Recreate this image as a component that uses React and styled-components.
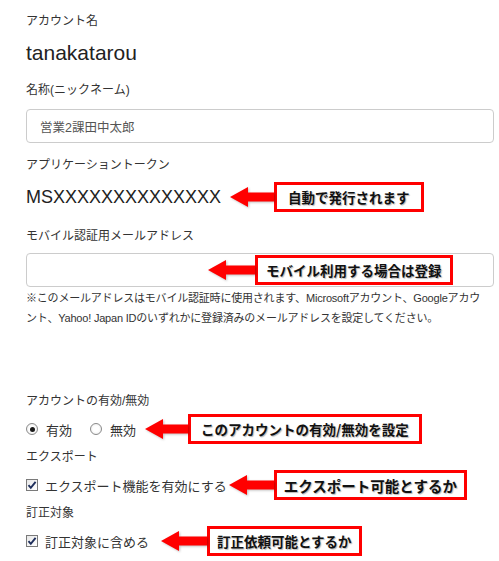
import styled, { createGlobalStyle } from "styled-components";

const GlobalStyle = createGlobalStyle`
  body {
    margin: 0;
    background: #ffffff;
    color: #333;
    font-family: "Liberation Sans", "Noto Sans CJK JP", sans-serif;
  }
`;

const Page = styled.div`
  display: flex;
  flex-direction: column;
  padding: 11px 5px 0 26px;
`;

const Label = styled.div`
  font-size: 12px;
  line-height: 20px;
  color: #333;
  margin-top: ${(p) => p.$mt || 0}px;
`;

const AccountValue = styled.div`
  font-size: 21px;
  line-height: 24px;
  color: #222;
  margin-top: 10px;
`;

const InputWrap = styled.div`
  position: relative;
  margin-top: ${(p) => p.$mt || 0}px;
`;

const TextInput = styled.input`
  display: block;
  box-sizing: border-box;
  width: 100%;
  height: 34px;
  border: 1px solid #ccc;
  border-radius: 4px;
  padding: 0 13px;
  font-family: inherit;
  font-size: 12.5px;
  color: #555;
  background: #fff;
  outline: none;
`;

const TokenRow = styled.div`
  display: flex;
  align-items: center;
  height: 30px;
  margin-top: 7px;
`;

const Token = styled.span`
  font-size: 18px;
  color: #222;
`;

const Callout = styled.div`
  display: flex;
  align-items: center;
  margin-left: ${(p) => p.$ml || 0}px;
`;

const Overlay = styled(Callout)`
  position: absolute;
  left: 182px;
  top: 2px;
  margin-left: 0;
`;

const CalloutBox = styled.div`
  box-sizing: border-box;
  height: 30px;
  display: flex;
  align-items: center;
  padding: 0 ${(p) => p.$pad || 11}px;
  border: 3px solid #ff0000;
  background: #fff;
  font-family: "Noto Sans CJK JP", sans-serif;
  font-weight: 700;
  font-size: ${(p) => p.$size || 13.5}px;
  color: #111;
  white-space: nowrap;
  text-shadow: 1px 1px 1px rgba(0, 0, 0, 0.28);
`;

const ArrowSvg = styled.svg`
  display: block;
  flex: none;
  filter: drop-shadow(1px 1px 1px rgba(0, 0, 0, 0.25));
`;

const Note = styled.div`
  margin-top: 1px;
  font-size: 11px;
  line-height: 20px;
  letter-spacing: -0.2px;
  color: #333;
  white-space: nowrap;
`;

const OptionRow = styled.div`
  display: flex;
  align-items: center;
  height: 30px;
  margin-top: 3px;
`;

const Option = styled.label`
  display: flex;
  align-items: center;
  gap: ${(p) => p.$gap || 8}px;
  margin-right: ${(p) => p.$mr || 0}px;
  font-family: "Noto Sans CJK JP", sans-serif;
  font-size: 13px;
  color: #333;
`;

const Radio = styled.span`
  box-sizing: border-box;
  width: 12px;
  height: 12px;
  border-radius: 50%;
  border: 1px solid #8a8a8a;
  background: radial-gradient(circle, #ffffff 40%, #e6e6e6 100%);
  display: flex;
  align-items: center;
  justify-content: center;
  &::after {
    content: "";
    width: 5px;
    height: 5px;
    border-radius: 50%;
    background: ${(p) => (p.$checked ? "#1a1a1a" : "transparent")};
  }
`;

const CheckBox = styled.span`
  box-sizing: border-box;
  width: 12px;
  height: 12px;
  border: 1px solid #7a7a7a;
  background: linear-gradient(135deg, #e8e8e8, #ffffff);
  display: flex;
  align-items: center;
  justify-content: center;
`;

function Arrow({ width = 44 }) {
  return (
    <ArrowSvg width={width} height="22" viewBox={`0 0 ${width} 22`}>
      <polygon points="0,11 18,1 18,21" fill="#ff0000" />
      <rect x="16" y="6.5" width={width - 16} height="9" fill="#ff0000" />
    </ArrowSvg>
  );
}

function Check() {
  return (
    <CheckBox>
      <svg width="10" height="10" viewBox="0 0 10 10">
        <path
          d="M1.5 5.2 L3.8 7.8 L8.6 1.8"
          fill="none"
          stroke="#1f2f5c"
          strokeWidth="1.9"
        />
      </svg>
    </CheckBox>
  );
}

export default function App() {
  return (
    <>
      <GlobalStyle />
      <Page>
        <Label>アカウント名</Label>
        <AccountValue>tanakatarou</AccountValue>

        <Label $mt={15}>名称(ニックネーム)</Label>
        <InputWrap $mt={9}>
          <TextInput readOnly value="営業2課田中太郎" />
        </InputWrap>

        <Label $mt={12}>アプリケーショントークン</Label>
        <TokenRow>
          <Token>MSXXXXXXXXXXXXXX</Token>
          <Callout $ml={9}>
            <Arrow width={44} />
            <CalloutBox $pad={11}>自動で発行されます</CalloutBox>
          </Callout>
        </TokenRow>

        <Label $mt={14}>モバイル認証用メールアドレス</Label>
        <InputWrap $mt={7}>
          <TextInput readOnly value="" />
          <Overlay>
            <Arrow width={47} />
            <CalloutBox $pad={8}>モバイル利用する場合は登録</CalloutBox>
          </Overlay>
        </InputWrap>
        <Note>
          ※このメールアドレスはモバイル認証時に使用されます、Microsoftアカウント、Googleアカウ
          <br />
          ント、Yahoo! Japan IDのいずれかに登録済みのメールアドレスを設定してください。
        </Note>

        <Label $mt={63}>アカウントの有効/無効</Label>
        <OptionRow>
          <Option $mr={18}>
            <Radio $checked />
            有効
          </Option>
          <Option>
            <Radio />
            無効
          </Option>
          <Callout $ml={9}>
            <Arrow width={43} />
            <CalloutBox $pad={10}>このアカウントの有効/無効を設定</CalloutBox>
          </Callout>
        </OptionRow>

        <Label $mt={3}>エクスポート</Label>
        <OptionRow>
          <Option $gap={7}>
            <Check />
            エクスポート機能を有効にする
          </Option>
          <Callout $ml={2}>
            <Arrow width={45} />
            <CalloutBox $pad={7} $size={14.5}>
              エクスポート可能とするか
            </CalloutBox>
          </Callout>
        </OptionRow>

        <Label $mt={3}>訂正対象</Label>
        <OptionRow>
          <Option $gap={7}>
            <Check />
            訂正対象に含める
          </Option>
          <Callout $ml={12}>
            <Arrow width={46} />
            <CalloutBox $pad={7}>訂正依頼可能とするか</CalloutBox>
          </Callout>
        </OptionRow>
      </Page>
    </>
  );
}
